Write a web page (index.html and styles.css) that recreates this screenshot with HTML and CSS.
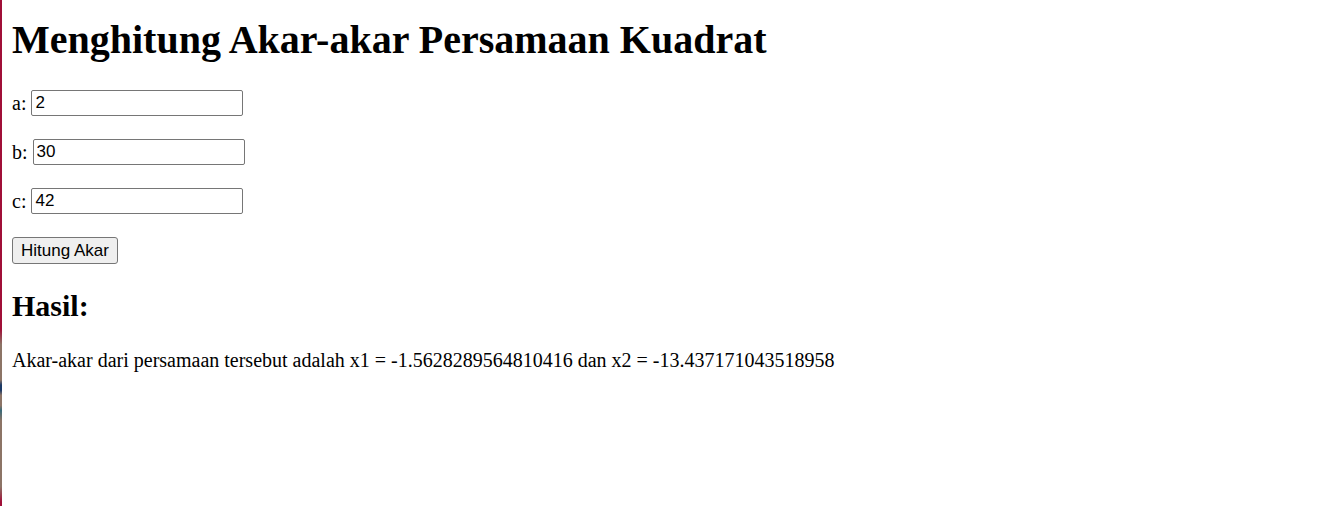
FILE: index.html
```html
<!DOCTYPE html>
<html lang="id">
<head>
<meta charset="utf-8">
<title>Menghitung Akar-akar Persamaan Kuadrat</title>
<link rel="stylesheet" href="styles.css">
</head>
<body>
<main class="page">
<h1 class="title">Menghitung Akar-akar Persamaan Kuadrat</h1>
<form class="form">
<div class="field"><label for="a">a:</label><input class="input" type="text" id="a" value="2"></div>
<div class="field"><label for="b">b:</label><input class="input" type="text" id="b" value="30"></div>
<div class="field"><label for="c">c:</label><input class="input" type="text" id="c" value="42"></div>
<button class="button" type="button">Hitung Akar</button>
</form>
<h2 class="subtitle">Hasil:</h2>
<p class="result">Akar-akar dari persamaan tersebut adalah x1 = -1.5628289564810416 dan x2 = -13.437171043518958</p>
</main>
</body>
</html>
```
FILE: styles.css
```css
* { box-sizing: border-box; }
body {
  margin: 0;
  background: #fff;
  color: #000;
  font: 20px/24px "Liberation Serif", "Times New Roman", serif;
}
.page {
  min-height: 100vh;
  padding: 16px 10px;
  border-left: 2px solid;
  border-image: linear-gradient(#a00f38 0 65%, #8c7466 68% 75%, #1c3a66 76% 77%, #8c7466 78% 80%, #3a6a78 81%, #8c7466 83% 96%, #a00f38 99%) 1;
}
.title { margin: 0 0 26px; font-size: 40px; line-height: 48px; }
.form { display: flex; flex-direction: column; align-items: flex-start; gap: 23px; }
.field { display: flex; align-items: center; gap: 5px; }
.input {
  width: 212px;
  height: 26px;
  padding: 1px 3px;
  border: 1px solid #767676;
  border-radius: 2px;
  background: #fff;
  color: #000;
  font: 17px "Liberation Sans", Arial, sans-serif;
}
.button {
  height: 27px;
  padding: 1px 8px;
  border: 1px solid #767676;
  border-radius: 3px;
  background: #efefef;
  color: #000;
  font: 17px "Liberation Sans", Arial, sans-serif;
}
.subtitle { margin: 25px 0; font-size: 30px; line-height: 34px; }
.result { margin: 0; }
```
